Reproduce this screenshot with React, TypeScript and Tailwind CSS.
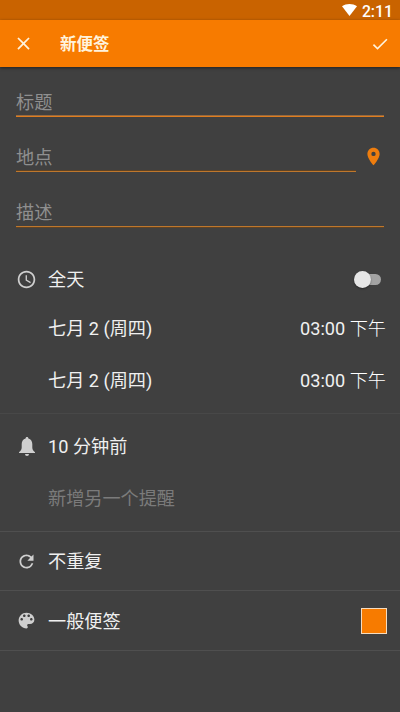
import React from 'react';
import { MdAccessTime, MdCheck, MdClose, MdPlace, MdRefresh } from 'react-icons/md';

const WifiIcon = () => (
  <svg viewBox="0 0 15 12" className="h-3 w-[15px]" fill="currentColor">
    <path d="M0 2.3C4.4-.7 10.6-.7 15 2.3L7.5 12z" />
  </svg>
);

const BellIcon = () => (
  <svg viewBox="0 0 16 19" className="mb-[2px] h-[19px] w-4" fill="currentColor">
    <path d="M8 0C7.1 0 6.6.6 6.6 1.5 4 2.2 2.7 4.4 2.7 7v3.5c0 2.3-1.2 3.5-2.7 4.7v.9h16v-.9c-1.5-1.2-2.7-2.4-2.7-4.7V7c0-2.6-1.3-4.8-3.9-5.5C9.4.6 8.9 0 8 0zM6 17.1a2 1.9 0 0 0 4 0z" />
  </svg>
);

const PaletteIcon = () => (
  <svg viewBox="0 0 24 24" className="h-[21px] w-[21px]" fill="currentColor">
    <path d="M12 3c-4.97 0-9 4.03-9 9s4.03 9 9 9c.83 0 1.5-.67 1.5-1.5 0-.39-.15-.74-.39-1.01-.23-.26-.38-.61-.38-.99 0-.83.67-1.5 1.5-1.5H16c2.76 0 5-2.24 5-5 0-4.42-4.03-8-9-8zm-5.5 9c-.83 0-1.5-.67-1.5-1.5S5.67 9 6.5 9 8 9.67 8 10.5 7.33 12 6.5 12zm3-4C8.67 8 8 7.33 8 6.5S8.67 5 9.5 5s1.5.67 1.5 1.5S10.33 8 9.5 8zm5 0c-.83 0-1.5-.67-1.5-1.5S13.67 5 14.5 5s1.5.67 1.5 1.5S15.33 8 14.5 8zm3 4c-.83 0-1.5-.67-1.5-1.5S16.67 9 17.5 9s1.5.67 1.5 1.5-.67 1.5-1.5 1.5z" />
  </svg>
);

interface FieldProps {
  label: string;
  lineClass: string;
  children?: React.ReactNode;
}

const Field: React.FC<FieldProps> = ({ label, lineClass, children }) => {
  return (
    <div className="flex h-[55px] items-stretch">
      <div className={`flex flex-1 items-end border-b ${lineClass}`}>
        <span className="h-[27px] text-[18.2px] leading-[27px] text-[#8f8f8f]">{label}</span>
      </div>
      {children}
    </div>
  );
};

interface RowProps {
  icon?: React.ReactNode;
  label: string;
  className: string;
  labelClass?: string;
  children?: React.ReactNode;
}

const Row: React.FC<RowProps> = ({ icon, label, className, labelClass = '', children }) => {
  return (
    <div className={`flex items-center pr-[13px] pl-[15px] ${className}`}>
      <div className="flex w-[23px] justify-center text-[#cfcfcf]">{icon}</div>
      <span className={`ml-[10px] flex-1 text-[18.15px] leading-6 ${labelClass}`}>{label}</span>
      {children}
    </div>
  );
};

const dates = [
  { id: 'start', day: '七月 2 (周四)', time: '03:00', period: '下午' },
  { id: 'end', day: '七月 2 (周四)', time: '03:00', period: '下午' }
];

export default function App() {
  return (
    <div className="flex h-[712px] w-[400px] flex-col overflow-hidden bg-[#404040] font-['Roboto','Noto_Sans_CJK_SC',sans-serif] text-[#f0f0f0]">
      {/* Status bar */}
      <div className="flex h-5 items-center justify-end bg-[#c96300] pr-[7px] text-white">
        <WifiIcon />
        <span className="ml-[5px] pt-[3px] text-[15.8px] leading-5 font-medium">2:11</span>
      </div>

      {/* Toolbar */}
      <header className="z-10 flex h-[47px] items-center bg-[#f77b00] pr-[10px] pl-[13px] text-[#fff3dc] shadow-[0_1px_3px_rgba(0,0,0,0.5)]">
        <button aria-label="关闭">
          <MdClose className="h-[21px] w-[21px]" />
        </button>
        <h1 className="ml-[26px] flex-1 pt-[2px] text-[16.5px] leading-6 font-bold">新便签</h1>
        <button aria-label="保存">
          <MdCheck className="h-5 w-5" />
        </button>
      </header>

      {/* Text fields */}
      <div className="-mt-[5px] px-4">
        <Field label="标题" lineClass="border-[#e07d1e] shadow-[inset_0_-1px_0_#96693f]" />
        <Field label="地点" lineClass="border-[#bf772c] shadow-[inset_0_-1px_0_#5f4324]">
          <div className="flex w-7 items-end justify-end pb-[5px]">
            <MdPlace className="h-[21px] w-[21px] text-[#ee7d0e]" />
          </div>
        </Field>
        <Field label="描述" lineClass="border-[#bf772c] shadow-[0_1px_0_#5f4324]" />
      </div>

      {/* Date and time */}
      <section className="border-b border-[#484848] pt-[28px] pb-[6px]">
        <Row
          icon={<MdAccessTime className="h-[21px] w-[21px]" />}
          label="全天"
          className="h-[48px]"
          labelClass="pt-[2px]"
        >
          <div className="mr-[6px] flex h-[11px] w-[26px] items-center rounded-full bg-[#a3a3a3]">
            <div className="-ml-[1px] h-[17px] w-[17px] shrink-0 rounded-full bg-[#e6e6e6] shadow-[0_1px_2px_rgba(0,0,0,0.4)]" />
          </div>
        </Row>
        {dates.map((date) => (
          <Row key={date.id} label={date.day} className="h-[52px]">
            <span className="mr-px text-[18.15px] leading-6">
              {date.time} <span className="font-light text-white">{date.period}</span>
            </span>
          </Row>
        ))}
      </section>

      {/* Reminders */}
      <section className="border-b border-[#4f4f4f] pt-[7px] pb-[6px]">
        <Row icon={<BellIcon />} label="10 分钟前" className="h-[52px]" />
        <Row label="新增另一个提醒" className="h-[52px] text-[#7b7b7b]" />
      </section>

      <section className="border-b border-[#4f4f4f]">
        <Row
          icon={<MdRefresh className="h-[21px] w-[21px]" />}
          label="不重复"
          className="h-[58px]"
          labelClass="pt-[2px]"
        />
      </section>

      <section className="border-b border-[#4f4f4f]">
        <Row icon={<PaletteIcon />} label="一般便签" className="h-[59px]" labelClass="pt-[2px]">
          <div className="h-[26px] w-[26px] border border-[#f5dcc0] bg-[#f77b00]" />
        </Row>
      </section>
    </div>
  );
}
